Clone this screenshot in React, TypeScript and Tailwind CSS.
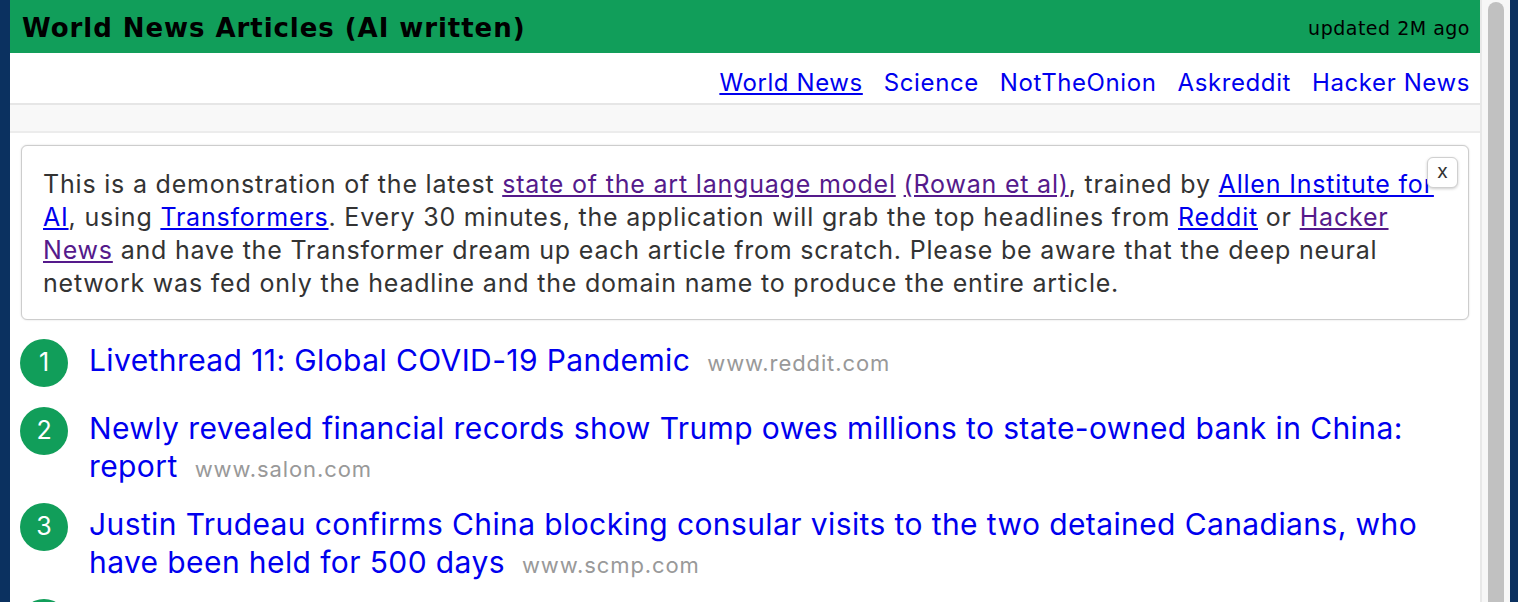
const articles = [
  { title: "Livethread 11: Global COVID-19 Pandemic", domain: "www.reddit.com" },
  {
    title: "Newly revealed financial records show Trump owes millions to state-owned bank in China: report",
    domain: "www.salon.com",
  },
  {
    title: "Justin Trudeau confirms China blocking consular visits to the two detained Canadians, who have been held for 500 days",
    domain: "www.scmp.com",
  },
  { title: "Coronavirus: latest updates from around the world", domain: "www.bbc.com" },
];

const navLinks = ["World News", "Science", "NotTheOnion", "Askreddit", "Hacker News"];

function Link({ children, visited }: { children: React.ReactNode; visited?: boolean }) {
  return (
    <a href="#" className={visited ? "text-[#551a8b] underline" : "text-[#0000ee] underline"}>
      {children}
    </a>
  );
}

export default function App() {
  return (
    <div className="flex h-[602px] overflow-hidden bg-[#0b3160] font-['Inter',sans-serif]">
      <div className="w-[10px] shrink-0" />

      <main className="flex w-[1470px] shrink-0 flex-col bg-white">
        <header className="flex h-[53px] shrink-0 items-center justify-between bg-[#119e5a] pl-3 pr-[10px] pt-[3px] text-black">
          <h1 className="font-['DejaVu_Sans',sans-serif] text-[26px] font-bold tracking-[0.95px]">
            World News Articles (AI written)
          </h1>
          <span className="font-['DejaVu_Sans',sans-serif] text-[19px] tracking-[0.5px]">updated 2M ago</span>
        </header>

        <nav className="flex h-[52px] shrink-0 items-center justify-end gap-[21px] border-b-2 border-[#e6e6e6] pr-[10px] pt-[10px] text-[24px] tracking-[0.6px] text-[#0000ee]">
          {navLinks.map((l, i) => (
            <a key={l} href="#" className={i === 0 ? "underline" : ""}>
              {l}
            </a>
          ))}
        </nav>
        <div className="h-[28px] shrink-0 border-b-2 border-[#ececec] bg-[#f8f8f8]" />

        <div className="relative mx-[11px] mt-[12px] rounded-md border border-[#cdcdcd] bg-white px-[21px] pb-[19px] pt-[22px] shadow-[0_0_2px_rgba(0,0,0,0.15)]">
          <p className="text-[25px] leading-[33px] tracking-[0.8px] text-[#333]">
            This is a demonstration of the latest <Link visited>state of the art language model</Link>{" "}
            <Link visited>(Rowan et al)</Link>, trained by <Link>Allen Institute for AI</Link>, using{" "}
            <Link>Transformers</Link>. Every 30 minutes, the application will grab the top headlines from{" "}
            <Link>Reddit</Link> or <Link visited>Hacker News</Link> and have the Transformer dream up each article from
            scratch. Please be aware that the deep neural network was fed only the headline and the domain name to
            produce the entire article.
          </p>
          <button className="absolute right-[10px] top-[11px] flex h-[31px] w-[31px] items-center justify-center rounded-md border border-[#d0d0d0] bg-white pb-1 text-[20px] text-[#333] shadow-[0_1px_3px_rgba(0,0,0,0.2)]">
            x
          </button>
        </div>

        <ol className="mt-[21px] flex flex-col gap-[17px] pl-[10px] pr-[30px]">
          {articles.map((a, i) => (
            <li key={i} className="flex items-start gap-[21px]">
              <span className="-mt-[2px] mb-[5px] flex h-[48px] w-[48px] shrink-0 items-center justify-center rounded-full bg-[#119e5a] text-[25px] text-white">
                {i + 1}
              </span>
              <p className="text-[30px] leading-[38px] tracking-[0.4px]">
                <a href="#" className="text-[#0000ee]">
                  {a.title}
                </a>
                <span className="ml-[17px] text-[22px] tracking-[0.9px] text-[#999]">{a.domain}</span>
              </p>
            </li>
          ))}
        </ol>
      </main>

      <div className="w-[30px] shrink-0 border-l-2 border-[#e8e8e8] bg-[#f7f7f7] pl-[6px] pt-[2px]">
        <div className="h-[800px] w-4 rounded-full bg-[#c1c1c1]" />
      </div>
      <div className="flex-1" />
    </div>
  );
}
